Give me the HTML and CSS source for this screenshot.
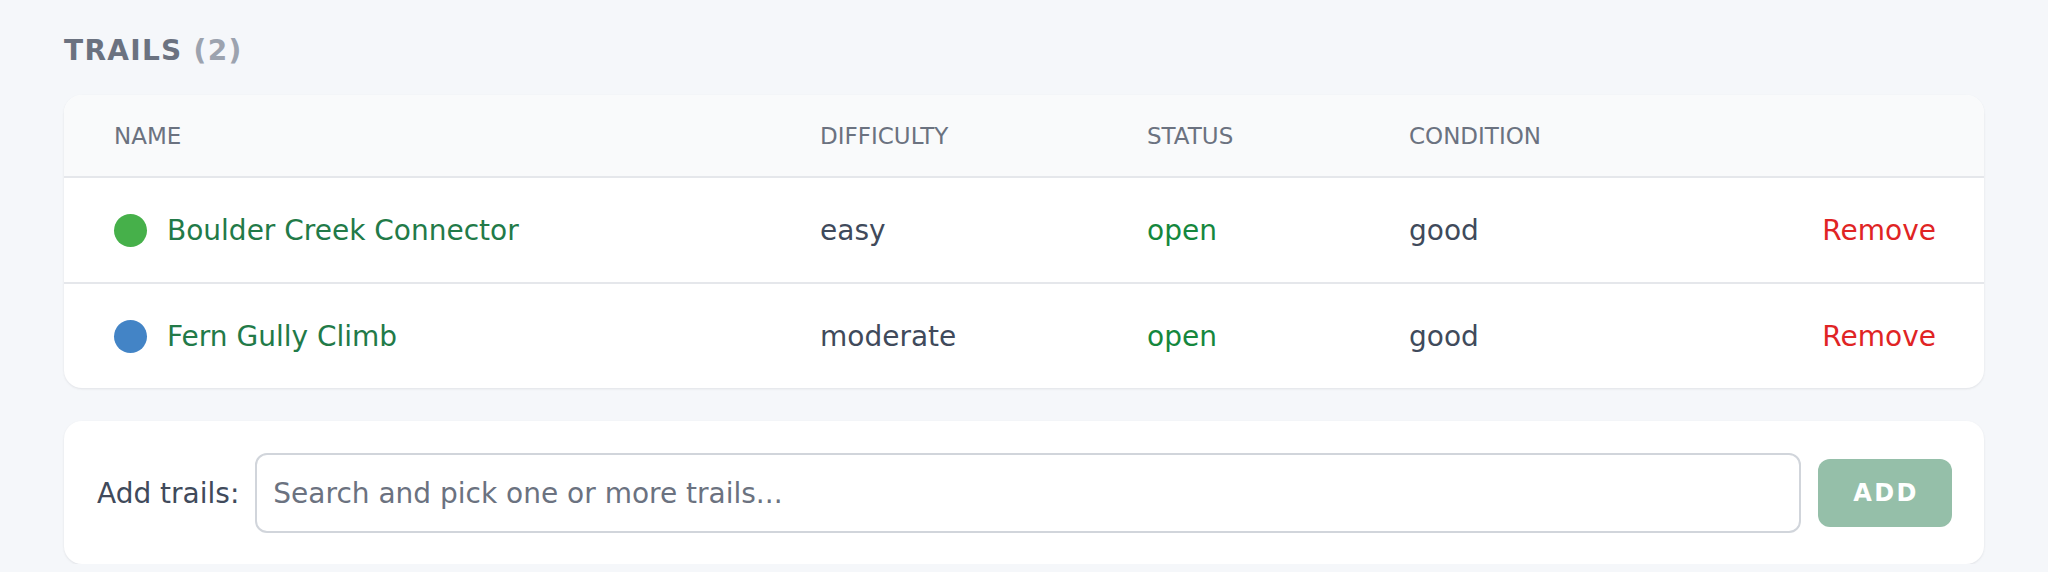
FILE: index.html
```html
<!DOCTYPE html>
<html lang="en">
<head>
<meta charset="utf-8">
<title>Trails</title>
<link rel="stylesheet" href="styles.css">
</head>
<body>
<main class="page">
  <h2 class="section-title">TRAILS <span class="count">(2)</span></h2>

  <section class="card table-card">
    <div class="row head">
      <div class="cell">NAME</div>
      <div class="cell">DIFFICULTY</div>
      <div class="cell">STATUS</div>
      <div class="cell">CONDITION</div>
      <div class="cell action"></div>
    </div>
    <div class="row">
      <div class="cell name"><span class="dot dot-green"></span><a class="trail-link">Boulder Creek Connector</a></div>
      <div class="cell">easy</div>
      <div class="cell status-open">open</div>
      <div class="cell">good</div>
      <div class="cell action"><span class="remove">Remove</span></div>
    </div>
    <div class="row">
      <div class="cell name"><span class="dot dot-blue"></span><a class="trail-link">Fern Gully Climb</a></div>
      <div class="cell">moderate</div>
      <div class="cell status-open">open</div>
      <div class="cell">good</div>
      <div class="cell action"><span class="remove">Remove</span></div>
    </div>
  </section>

  <section class="card add-card">
    <label class="add-label" for="trail-search">Add trails:</label>
    <input id="trail-search" class="add-input" type="text" placeholder="Search and pick one or more trails...">
    <button class="add-btn" type="button">ADD</button>
  </section>
</main>
</body>
</html>
```

FILE: styles.css
```css
* { box-sizing: border-box; }

html, body {
  margin: 0;
  padding: 0;
  background: #f5f7fa;
  font-family: "DejaVu Sans", "Liberation Sans", sans-serif;
}

.page {
  padding: 35px 64px 0 64px;
}

.section-title {
  margin: 0 0 28px 0;
  font-size: 28px;
  line-height: 32px;
  font-weight: 700;
  letter-spacing: 1.3px;
  color: #6b7280;
}

.count {
  color: #9ca3af;
}

.card {
  background: #ffffff;
  border-radius: 18px;
  box-shadow: 0 1px 3px rgba(15, 23, 42, 0.06), 0 1px 2px rgba(15, 23, 42, 0.03);
}

.table-card {
  overflow: hidden;
}

.row {
  display: grid;
  grid-template-columns: 706px 327px 262px 1fr auto;
  align-items: center;
  height: 106px;
  border-top: 2px solid #e5e7eb;
  font-size: 28px;
  color: #404a5b;
}

.row.head {
  height: 81px;
  border-top: none;
  background: #f9fafb;
  font-size: 23px;
  color: #6b7280;
}

.cell {
  padding-left: 50px;
  white-space: nowrap;
}

.cell.action {
  padding-left: 0;
  padding-right: 48px;
  text-align: right;
}

.cell.name {
  display: flex;
  align-items: center;
}

.dot {
  display: inline-block;
  width: 33px;
  height: 33px;
  border-radius: 50%;
  margin-right: 20px;
  flex: none;
}

.dot-green { background: #46b04a; }
.dot-blue { background: #4384c6; }

.trail-link {
  color: #227a48;
  text-decoration: none;
}

.status-open {
  color: #15873d;
}

.remove {
  color: #e02424;
}

.add-card {
  margin-top: 33px;
  display: flex;
  align-items: center;
  gap: 16px;
  padding: 32px 32px 31px 33px;
}

.add-label {
  font-size: 28px;
  color: #404a5b;
  white-space: nowrap;
}

.add-input {
  flex: 1;
  height: 80px;
  border: 2px solid #d1d5db;
  border-radius: 12px;
  padding: 0 16px;
  font-family: "DejaVu Sans", "Liberation Sans", sans-serif;
  font-size: 28px;
  color: #374151;
  background: #ffffff;
  outline: none;
}

.add-input::placeholder {
  color: #6b7280;
}

.add-btn {
  width: 134px;
  height: 68px;
  margin-left: 1px;
  border: none;
  border-radius: 12px;
  background: #95bfa9;
  color: #ffffff;
  font-family: "DejaVu Sans", "Liberation Sans", sans-serif;
  font-size: 24px;
  font-weight: 700;
  letter-spacing: 2.4px;
  padding: 0 0 0 2px;
}
```
